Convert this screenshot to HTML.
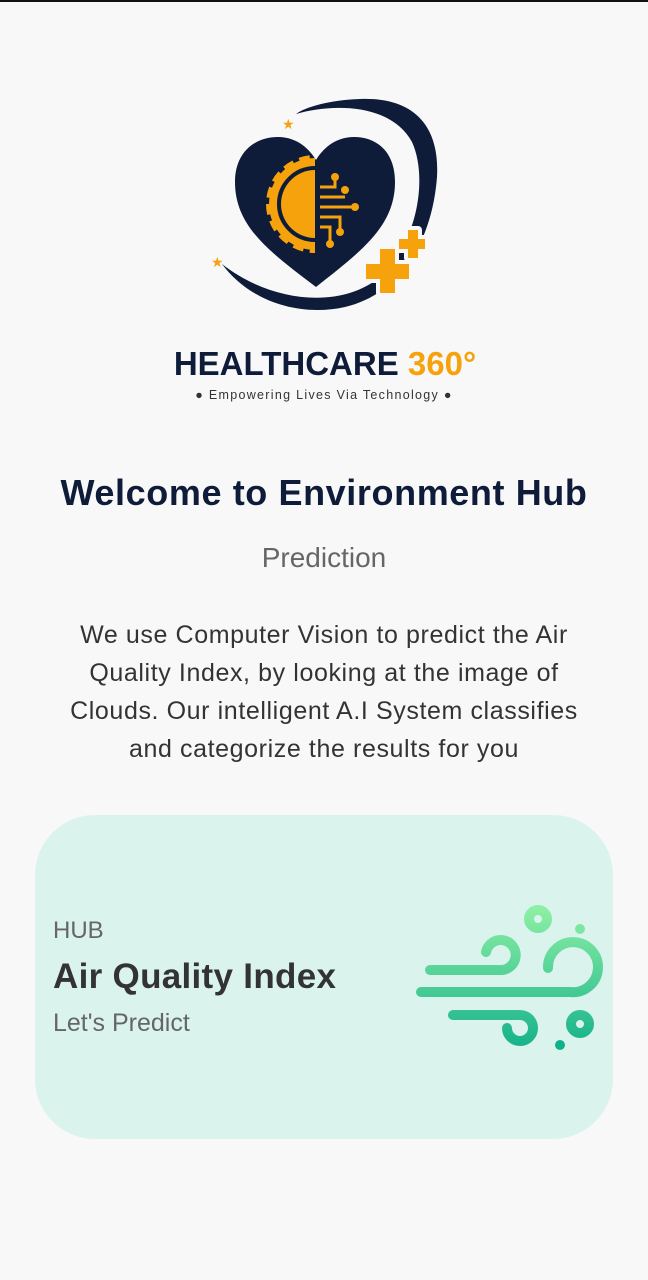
<!DOCTYPE html>
<html><head><style>
body{margin:0;width:648px;height:1280px;background:#f8f8f8;font-family:"Liberation Sans",sans-serif;position:relative;overflow:hidden;border-top:2px solid #111;box-sizing:border-box}
.t{position:absolute;left:0;width:648px;text-align:center}
</style></head><body>
<svg style="position:absolute;left:0;top:0" width="648" height="420">
<path d="M222,262 C250,300 300,315 345,305 C400,292 432,240 437,175 C440,120 410,95 360,97 C330,98 305,105 296,112 C330,102 390,100 412,140 C428,175 418,240 380,275 C340,308 270,300 222,262Z" fill="#0e1c3a"/>
<path d="M316,285 C270,250 235,225 235,180 C235,150 255,135 278,135 C298,135 310,148 316,158 C322,148 334,135 354,135 C377,135 395,150 395,180 C395,225 360,250 316,285Z" fill="#0e1c3a"/>
<path d="M315,168 L315,236 A34,34 0 0 1 315,168Z" fill="#f5a20c"/>
<circle cx="315" cy="202" r="44" fill="none" stroke="#f5a20c" stroke-width="10" stroke-dasharray="10 6" clip-path="inset(0 50% 0 0)"/>
<path d="M315,160 A42,42 0 0 0 315,244" fill="none" stroke="#f5a20c" stroke-width="8"/>
<path d="M320,185 H335 V175 M320,195 H345 M320,205 H352 M320,215 H340 V228 M320,225 H330 V240" stroke="#f5a20c" stroke-width="3" fill="none"/>
<g fill="#f8f8f8" stroke="#f8f8f8" stroke-width="8" stroke-linejoin="round">
<rect x="380" y="247" width="15" height="44"/><rect x="366" y="262" width="43" height="15"/>
<rect x="408" y="228" width="10" height="28"/><rect x="399" y="237" width="26" height="10"/></g>
<g fill="#f5a20c"><circle cx="335" cy="175" r="4"/><circle cx="345" cy="188" r="4"/><circle cx="355" cy="205" r="4"/><circle cx="340" cy="230" r="4"/><circle cx="330" cy="242" r="4"/>
<rect x="380" y="247" width="15" height="44"/><rect x="366" y="262" width="43" height="15"/>
<rect x="408" y="228" width="10" height="28"/><rect x="399" y="237" width="26" height="10"/>
<text x="282" y="127" font-size="14">★</text><text x="211" y="265" font-size="14">★</text></g>
<text x="325" y="373" text-anchor="middle" font-size="33" font-weight="bold" fill="#0e1c3a">HEALTHCARE <tspan fill="#f5a20c">360°</tspan></text>
<text x="324" y="397" text-anchor="middle" font-size="12.5" fill="#333" letter-spacing="1.3">● Empowering Lives Via Technology ●</text>
</svg>
<div class="t" style="top:470px;font-size:36px;font-weight:bold;color:#0e1c3a;letter-spacing:0.6px">Welcome to Environment Hub</div>
<div class="t" style="top:540px;font-size:28px;color:#666">Prediction</div>
<div class="t" style="top:614px;font-size:25px;line-height:38px;color:#333;letter-spacing:0.6px">We use Computer Vision to predict the Air<br>Quality Index, by looking at the image of<br>Clouds. Our intelligent A.I System classifies<br>and categorize the results for you</div>
<div style="position:absolute;left:35px;top:813px;width:578px;height:324px;border-radius:60px;background:#daf3ed"></div>
<div style="position:absolute;left:53px;top:915px;font-size:24px;color:#666">HUB</div>
<div style="position:absolute;left:53px;top:955px;font-size:35px;font-weight:bold;color:#333;letter-spacing:0.3px">Air Quality Index</div>
<div style="position:absolute;left:53px;top:1007px;font-size:25px;color:#666">Let's Predict</div>
<svg style="position:absolute;left:0;top:880px" width="648" height="190" viewBox="0 880 648 190">
<defs><linearGradient id="g" gradientUnits="userSpaceOnUse" x1="0" y1="905" x2="0" y2="1050"><stop offset="0" stop-color="#8ef0a4"/><stop offset="1" stop-color="#12b08a"/></linearGradient></defs>
<g fill="none" stroke="url(#g)" stroke-width="10" stroke-linecap="round">
<path d="M430,968 H500 A15,15 0 1 0 486,950"/>
<path d="M421,990 H570 A25,25 0 1 0 548,966"/>
<path d="M453,1013 H520 A13,13 0 1 1 507,1026"/>
<circle cx="538" cy="917" r="9"/><circle cx="580" cy="1022" r="9"/></g>
<circle cx="580" cy="927" r="5" fill="#7de6a0"/><circle cx="560" cy="1043" r="5" fill="#12b08a"/>
</svg>
</body></html>
